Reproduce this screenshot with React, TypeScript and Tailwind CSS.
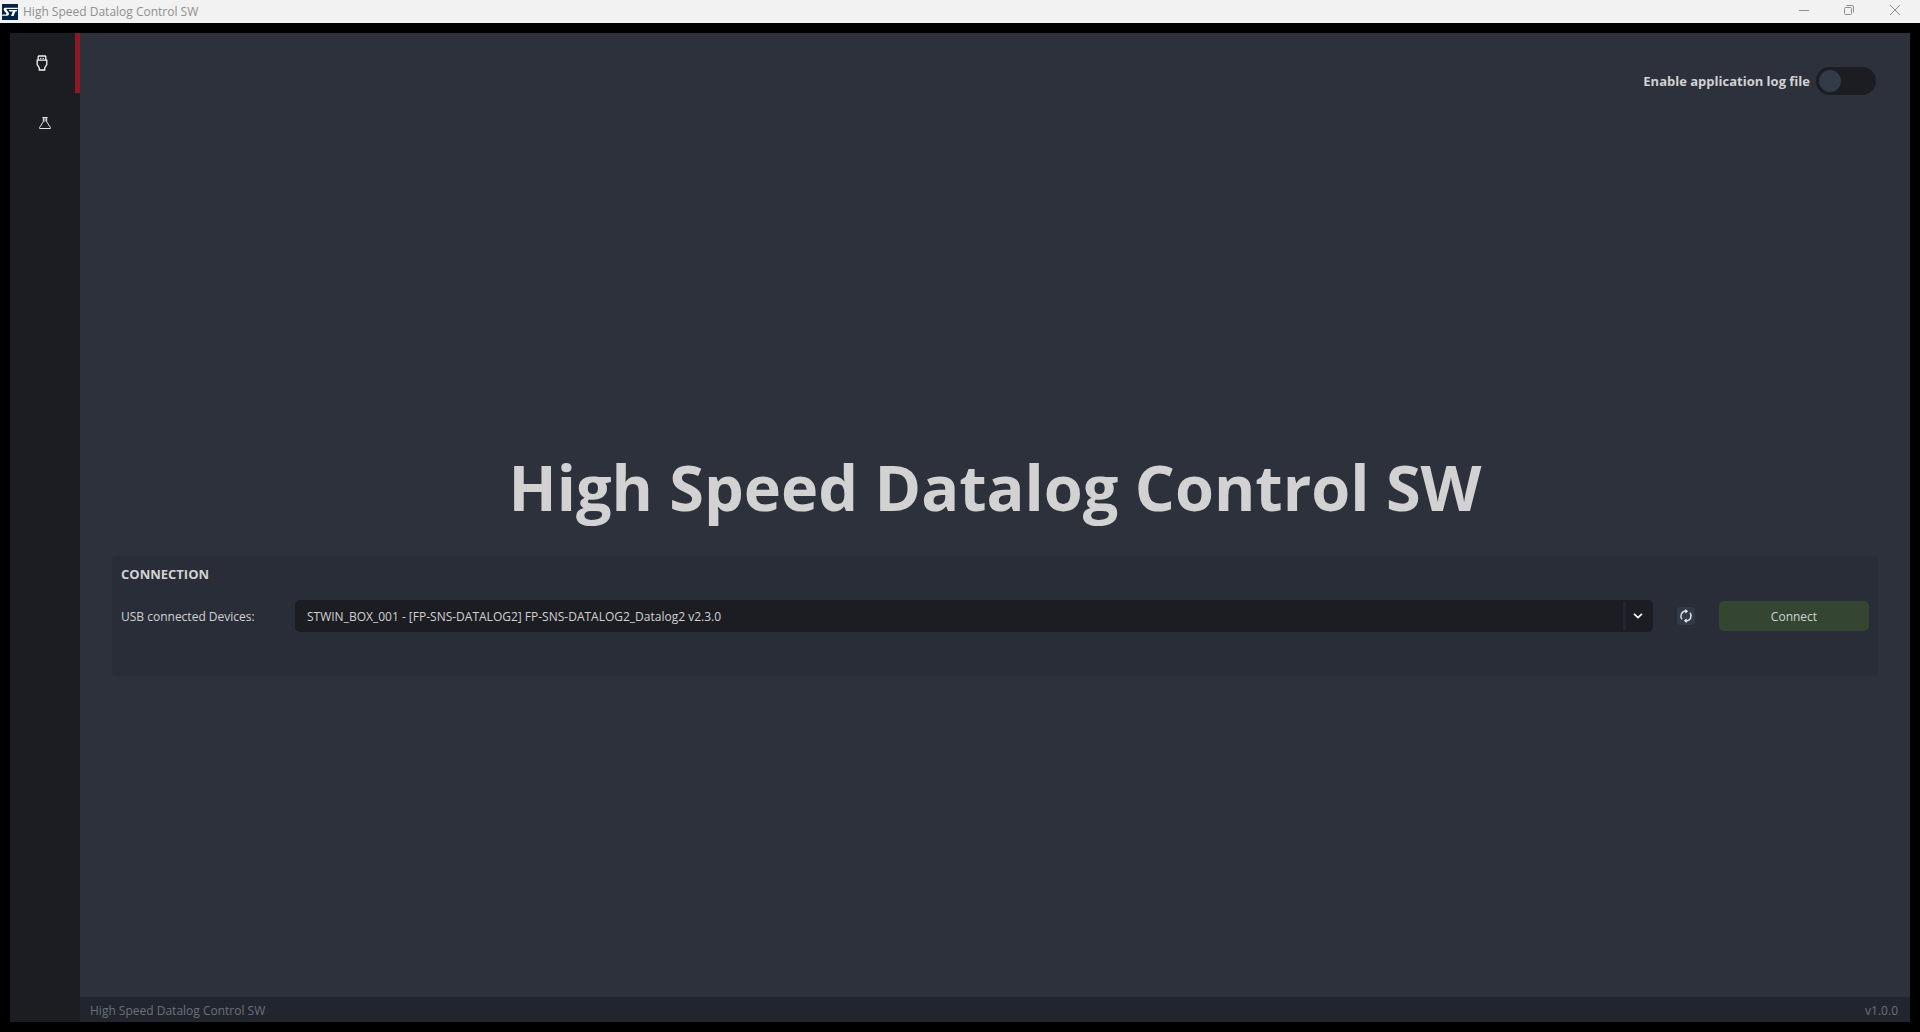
import { useState } from "react";

function StLogo() {
  return (
    <svg width="16" height="16" viewBox="0 0 16 16" className="shrink-0" aria-hidden="true">
      <rect width="16" height="16" fill="#03234b" />
      <path d="M3.2 3.8H16L15.6 5H5.2C4.4 5 4.3 5.5 4.7 6L6.4 8.2C7.6 9.8 6.8 11.8 4.8 11.8H0L0.5 10.4H3.8C4.6 10.4 4.7 9.8 4.3 9.3L2.4 7C1.2 5.4 1.6 3.8 3.2 3.8Z" fill="#fff" />
      <path d="M6.6 6H15.2L14.6 7.6H13.4L11.6 12H9L10.8 7.6H7.8Z" fill="#fff" />
    </svg>
  );
}

function PlugIcon() {
  return (
    <svg width="12" height="16" viewBox="0 0 12 16" fill="none" stroke="#f4f4f4" strokeWidth="1.3" aria-hidden="true">
      <path d="M2.2 5V1.6L2.8 1H9.2L9.8 1.6V5" />
      <path d="M1.2 5.2H10.8V9.5L8.7 13V15H3.3V13L1.2 9.5Z" />
      <path d="M4 3.4H5.4M6.6 3.4H8" strokeWidth="1" />
    </svg>
  );
}

function FlaskIcon() {
  return (
    <svg width="12" height="12" viewBox="0 0 12 12" fill="none" stroke="#e2e2e4" strokeWidth="1" aria-hidden="true">
      <path d="M3.4 0.5H8.6" />
      <rect x="4" y="1" width="4" height="3.6" fill="#85868a" stroke="none" />
      <path d="M4.3 1V4.8L0.6 10.4V11.5H11.4V10.4L7.7 4.8V1" />
    </svg>
  );
}

function RefreshIcon() {
  return (
    <svg width="14" height="14" viewBox="0 0 14 14" fill="none" stroke="#dcdee2" strokeWidth="1.5" aria-hidden="true">
      <path d="M2.9 10.2A5.2 5.2 0 0 1 6.6 2" />
      <path d="M11.1 3.8A5.2 5.2 0 0 1 7.4 12" />
      <path d="M6.4 0L9 2.2L6.4 4.4Z" fill="#fff" stroke="none" />
      <path d="M7.6 14L5 11.8L7.6 9.6Z" fill="#fff" stroke="none" />
    </svg>
  );
}

function TitleBar() {
  return (
    <header className="flex h-[23px] shrink-0 items-center bg-[#f2f2f2] pl-0.5 text-[#8f8f8f]">
      <StLogo />
      <span className="ml-[5px] flex-1 text-xs">High Speed Datalog Control SW</span>
      <div className="flex self-stretch pr-px pb-[3px]">
        <button aria-label="Minimize" className="flex w-[45px] items-center justify-center">
          <svg width="10" height="10" viewBox="0 0 10 10" stroke="currentColor"><path d="M0 5.5H10" /></svg>
        </button>
        <button aria-label="Restore" className="flex w-[45px] items-center justify-center">
          <svg width="10" height="10" viewBox="0 0 10 10" fill="none" stroke="currentColor">
            <rect x="0.5" y="2.5" width="7" height="7" rx="1" />
            <path d="M2.5 0.5H8A1.5 1.5 0 0 1 9.5 2V7.5" />
          </svg>
        </button>
        <button aria-label="Close" className="flex w-12 items-center justify-center">
          <svg width="10" height="10" viewBox="0 0 10 10" stroke="currentColor"><path d="M0 0L10 10M10 0L0 10" /></svg>
        </button>
      </div>
    </header>
  );
}

function Sidebar() {
  return (
    <nav className="flex w-[70px] shrink-0 flex-col bg-[#1b1d23]">
      <button aria-label="Connection" className="flex h-[60px] items-center justify-center border-r-[5px] border-[#8b1a24] pr-px">
        <PlugIcon />
      </button>
      <button aria-label="Experiments" className="flex h-[60px] items-center justify-center">
        <FlaskIcon />
      </button>
    </nav>
  );
}

function LogSwitch() {
  const [on, setOn] = useState(false);
  return (
    <div className="flex justify-end px-[34px] py-[34px]">
      <label className="flex cursor-pointer items-center gap-1.5 text-[13px] font-bold text-[#d2d2d2]">
        <span className="pt-0.5">Enable application log file</span>
        <input
          type="checkbox"
          role="switch"
          checked={on}
          onChange={(e) => setOn(e.target.checked)}
          className="flex h-7 w-[60px] appearance-none items-center rounded-full bg-[#1b1d23] px-[3px] before:size-[22px] before:rounded-full before:bg-[#343b48] checked:justify-end"
        />
      </label>
    </div>
  );
}

function ConnectionPanel() {
  return (
    <section className="min-h-[120px] rounded-[5px] bg-[#292d37] px-[9px] pt-2 text-xs text-[#d2d2d2]">
      <h2 className="text-[13px] leading-5 font-bold">CONNECTION</h2>
      <div className="mt-4 flex items-center">
        <label htmlFor="device" className="w-[174px] shrink-0 pt-0.5">USB connected Devices:</label>
        <div className="relative flex-1">
          <select id="device" className="block h-8 w-full appearance-none rounded-[5px] bg-[#1b1d23] pt-0.5 pr-24 pl-3">
            <option>STWIN_BOX_001 - [FP-SNS-DATALOG2] FP-SNS-DATALOG2_Datalog2 v2.3.0</option>
          </select>
          <div className="pointer-events-none absolute inset-y-0.5 right-0 flex w-[30px] items-center justify-center border-l-[3px] border-[#21252d] pr-1">
            <svg width="10" height="6" viewBox="0 0 10 6" fill="none" stroke="#fff" strokeWidth="1.6" aria-hidden="true">
              <path d="M1 0.8L5 4.6L9 0.8" />
            </svg>
          </div>
        </div>
        <button aria-label="Refresh devices" className="mx-6 flex size-[18px] items-center justify-center rounded bg-[#343b48]">
          <RefreshIcon />
        </button>
        <button className="h-[30px] w-[150px] rounded-[5px] bg-[#344632] pt-0.5">Connect</button>
      </div>
    </section>
  );
}

export default function App() {
  return (
    <div className="flex h-screen flex-col bg-black font-['Open_Sans','Noto_Sans',sans-serif]">
      <TitleBar />
      <div className="flex flex-1 p-2.5">
        <Sidebar />
        <div className="flex flex-1 flex-col bg-[#2c313c]">
          <LogSwitch />
          <main className="flex flex-1 flex-col justify-center px-8 pb-2">
            <h1 className="mb-6 text-center text-[63px] leading-[90px] font-bold text-[#d2d2d2]">High Speed Datalog Control SW</h1>
            <ConnectionPanel />
          </main>
          <footer className="flex h-[25px] items-center justify-between bg-[#21252d] pt-0.5 pr-3 pl-2.5 text-xs text-[#6b717c]">
            <span>High Speed Datalog Control SW</span>
            <span>v1.0.0</span>
          </footer>
        </div>
      </div>
    </div>
  );
}
